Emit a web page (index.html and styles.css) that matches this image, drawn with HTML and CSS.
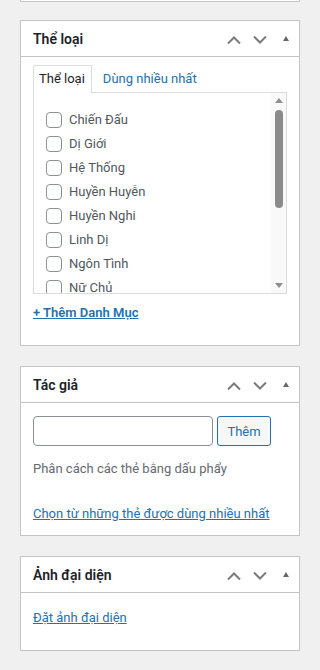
FILE: index.html
```html
<!DOCTYPE html>
<html lang="vi">
<head>
    <meta charset="UTF-8">
    <meta name="viewport" content="width=device-width, initial-scale=1.0">
    <title>Bài viết | Sidebar</title>
    <link rel="stylesheet" href="styles.css">
</head>
<body>
    <div class="postbox postbox-tail"></div>

    <!-- Thể loại -->
    <div class="postbox">
        <div class="postbox-header">
            <h2>Thể loại</h2>
            <div class="handle-actions">
                <button class="handle-btn" type="button" aria-label="Lên">
                    <svg width="14" height="8" viewBox="0 0 14 8"><polyline points="1,7.5 7,1.5 13,7.5" /></svg>
                </button>
                <button class="handle-btn" type="button" aria-label="Xuống">
                    <svg width="14" height="8" viewBox="0 0 14 8"><polyline points="1,0.5 7,6.5 13,0.5" /></svg>
                </button>
                <button class="handle-btn" type="button" aria-label="Thu gọn">
                    <span class="toggle-indicator"></span>
                </button>
            </div>
        </div>
        <div class="inside inside-cat">
            <ul class="tabs">
                <li class="tab active">Thể loại</li>
                <li class="tab"><a href="#">Dùng nhiều nhất</a></li>
            </ul>
            <div class="tabs-panel">
                <ul class="checklist">
                    <li><label><input type="checkbox"> Chiến Đấu</label></li>
                    <li><label><input type="checkbox"> Dị Giới</label></li>
                    <li><label><input type="checkbox"> Hệ Thống</label></li>
                    <li><label><input type="checkbox"> Huyền Huyễn</label></li>
                    <li><label><input type="checkbox"> Huyền Nghi</label></li>
                    <li><label><input type="checkbox"> Linh Dị</label></li>
                    <li><label><input type="checkbox"> Ngôn Tình</label></li>
                    <li><label><input type="checkbox"> Nữ Chủ</label></li>
                </ul>
                <div class="scrollbar">
                    <span class="arrow"><span class="tri-up"></span></span>
                    <div class="track"><span class="thumb"></span></div>
                    <span class="arrow"><span class="tri-down"></span></span>
                </div>
            </div>
            <a class="add-link" href="#">+ Thêm Danh Mục</a>
        </div>
    </div>

    <!-- Tác giả -->
    <div class="postbox">
        <div class="postbox-header">
            <h2>Tác giả</h2>
            <div class="handle-actions">
                <button class="handle-btn" type="button" aria-label="Lên">
                    <svg width="14" height="8" viewBox="0 0 14 8"><polyline points="1,7.5 7,1.5 13,7.5" /></svg>
                </button>
                <button class="handle-btn" type="button" aria-label="Xuống">
                    <svg width="14" height="8" viewBox="0 0 14 8"><polyline points="1,0.5 7,6.5 13,0.5" /></svg>
                </button>
                <button class="handle-btn" type="button" aria-label="Thu gọn">
                    <span class="toggle-indicator"></span>
                </button>
            </div>
        </div>
        <div class="inside inside-tags">
            <div class="tag-row">
                <input class="tag-input" type="text">
                <button class="btn-add" type="button">Thêm</button>
            </div>
            <p class="howto">Phân cách các thẻ bằng dấu phẩy</p>
            <a class="tag-cloud-link" href="#">Chọn từ những thẻ được dùng nhiều nhất</a>
        </div>
    </div>

    <!-- Ảnh đại diện -->
    <div class="postbox">
        <div class="postbox-header">
            <h2>Ảnh đại diện</h2>
            <div class="handle-actions">
                <button class="handle-btn" type="button" aria-label="Lên">
                    <svg width="14" height="8" viewBox="0 0 14 8"><polyline points="1,7.5 7,1.5 13,7.5" /></svg>
                </button>
                <button class="handle-btn" type="button" aria-label="Xuống">
                    <svg width="14" height="8" viewBox="0 0 14 8"><polyline points="1,0.5 7,6.5 13,0.5" /></svg>
                </button>
                <button class="handle-btn" type="button" aria-label="Thu gọn">
                    <span class="toggle-indicator"></span>
                </button>
            </div>
        </div>
        <div class="inside inside-thumb">
            <a href="#">Đặt ảnh đại diện</a>
        </div>
    </div>
</body>
</html>
```

FILE: styles.css
```css
body {
    font-family: Roboto, "Noto Sans", sans-serif;
    font-size: 13px;
    line-height: 20px;
    color: #3c434a;
    background-color: #f0f0f1;
    margin: 0;
    padding: 0 20px;
}
a {
    color: #2271b1;
}
.postbox {
    background: #fff;
    border: 1px solid #c3c4c7;
    margin-bottom: 20px;
}
.postbox-tail {
    height: 1px;
    border-top: none;
    margin-bottom: 18px;
}
.postbox-header {
    display: flex;
    align-items: center;
    justify-content: space-between;
    height: 35px;
    padding-left: 12px;
    border-bottom: 1px solid #c3c4c7;
}
.postbox-header h2 {
    margin: 0;
    font-size: 14px;
    font-weight: 600;
    color: #1d2327;
}
.handle-actions {
    display: flex;
    height: 100%;
}
.handle-btn {
    width: 26px;
    height: 100%;
    padding: 0;
    margin: 0;
    border: none;
    background: none;
    display: flex;
    align-items: center;
    justify-content: center;
    cursor: pointer;
}
.handle-btn svg {
    margin-top: 2px;
}
.handle-btn polyline {
    fill: none;
    stroke: #787c82;
    stroke-width: 2;
}
.toggle-indicator {
    width: 0;
    height: 0;
    border-left: 3.5px solid transparent;
    border-right: 3.5px solid transparent;
    border-bottom: 5px solid #646970;
}

/* Thể loại */
.inside-cat {
    padding: 8px 12px 22px;
}
.tabs {
    list-style: none;
    margin: 0;
    padding: 0;
    display: flex;
    align-items: flex-end;
}
.tab {
    height: 26px;
    line-height: 26px;
    padding: 0 0 1px;
    margin-bottom: -1px;
    border: 1px solid transparent;
    border-bottom: none;
    position: relative;
}
.tab.active {
    padding: 0 6px 1px 5px;
    border-color: #dcdcde;
    background: #fff;
    color: #1d2327;
}
.tab a {
    margin-left: 10px;
    text-decoration: none;
}
.tabs-panel {
    display: flex;
    height: 200px;
    border: 1px solid #dcdcde;
}
.checklist {
    list-style: none;
    flex: 1;
    margin: 0;
    padding: 15px 0 0 12px;
    overflow: hidden;
}
.checklist li {
    height: 24px;
}
.checklist label {
    display: flex;
    align-items: center;
    height: 24px;
    color: #50575e;
}
.checklist input {
    appearance: none;
    width: 16px;
    height: 16px;
    margin: 0 7px 0 0;
    border: 1px solid #8c8f94;
    border-radius: 4px;
    background: #fff;
}
.scrollbar {
    width: 15px;
    display: flex;
    flex-direction: column;
    background: #f9f9f9;
}
.arrow {
    height: 15px;
    display: flex;
    align-items: center;
    justify-content: center;
}
.tri-up, .tri-down {
    width: 0;
    height: 0;
    border-left: 4px solid transparent;
    border-right: 4px solid transparent;
}
.tri-up {
    border-bottom: 5px solid #8f8f8f;
}
.tri-down {
    border-top: 5px solid #8f8f8f;
}
.track {
    flex: 1;
    padding-top: 2px;
    display: flex;
    justify-content: center;
}
.thumb {
    width: 8px;
    height: 98px;
    border-radius: 4px;
    background: #8b8b8b;
}
.add-link {
    display: inline-block;
    margin-top: 9px;
    font-weight: 600;
}

/* Tác giả */
.inside-tags {
    padding: 13px 12px 11px;
}
.tag-row {
    display: flex;
    gap: 4px;
}
.tag-input {
    width: 180px;
    height: 30px;
    box-sizing: border-box;
    margin: 0;
    border: 1px solid #8c8f94;
    border-radius: 4px;
}
.btn-add {
    width: 54px;
    height: 30px;
    margin: 0;
    padding: 0;
    border: 1px solid #2271b1;
    border-radius: 3px;
    background: #f6f7f7;
    color: #2271b1;
    font-family: inherit;
    font-size: 13px;
}
.howto {
    margin: 13px 0 0;
    color: #646970;
}
.tag-cloud-link {
    display: inline-block;
    margin-top: 25px;
}

/* Ảnh đại diện */
.inside-thumb {
    padding: 15px 12px 22px;
}
```
